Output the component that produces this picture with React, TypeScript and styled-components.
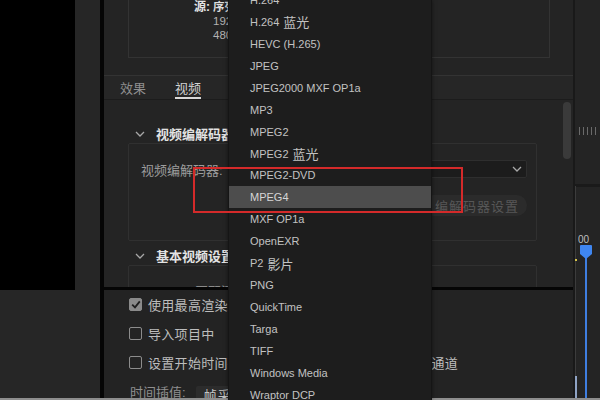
import React from "react";
import styled, { createGlobalStyle } from "styled-components";

const Global = createGlobalStyle`
  html, body { margin: 0; padding: 0; background: #252525; }
  body { font-family: "Liberation Sans", "Noto Sans CJK SC", sans-serif; }
  * { box-sizing: border-box; }
`;

const Root = styled.div`
  position: relative;
  width: 600px;
  height: 400px;
  overflow: hidden;
  background: #252525;
  display: flex;
  flex-direction: column;
  font-family: "Liberation Sans", "Noto Sans CJK SC", sans-serif;
`;

const Workspace = styled.div`
  display: flex;
  height: 398px;
`;

const BottomStrip = styled.div`
  height: 2px;
  background: #8e8e8e;
`;

const LeftPane = styled.div`
  width: 100px;
  display: flex;
  flex-direction: column;
  background: #262626;
`;

const Preview = styled.div`
  width: 75px;
  height: 290px;
  background: #000;
`;

const VDivider = styled.div`
  width: 4px;
  background: #050505;
`;

const ExportPanel = styled.div`
  width: 469px;
  display: flex;
  flex-direction: column;
  background: #242424;
`;

const Summary = styled.div`
  height: 76px;
  padding-left: 24px;
`;

const SummaryBox = styled.div`
  width: 422px;
  height: 58px;
  border-left: 1px solid #333;
  border-right: 1px solid #333;
  border-bottom: 1px solid #333;
  display: grid;
  grid-template-columns: 81px auto;
  grid-auto-rows: 14px;
  column-gap: 3px;
  align-content: start;
  padding-top: 0;
`;

const SumLabel = styled.div`
  text-align: right;
  font-size: 12px;
  line-height: 14px;
  font-weight: bold;
  color: #e4e4e4;
`;

const SumValue = styled.div<{ $bold?: boolean }>`
  font-size: 11.5px;
  line-height: 14px;
  color: ${(p) => (p.$bold ? "#dcdcdc" : "#b2b2b2")};
  font-weight: ${(p) => (p.$bold ? "bold" : "normal")};
  white-space: nowrap;
`;

const TabBar = styled.div`
  height: 25px;
  border-top: 1px solid #333;
  border-bottom: 1px solid #1c1c1c;
  display: flex;
  align-items: stretch;
  gap: 29px;
  padding-left: 16px;
  background: #262626;
`;

const Tab = styled.div<{ $active?: boolean }>`
  font-size: 13px;
  color: ${(p) => (p.$active ? "#d2d2d2" : "#8e8e8e")};
  display: flex;
  align-items: center;
  padding-top: 1px;
  border-bottom: 2px solid ${(p) => (p.$active ? "#d8d8d8" : "transparent")};
`;

const SettingsArea = styled.div`
  height: 188px;
  display: flex;
  overflow: hidden;
`;

const SettingsContent = styled.div`
  flex: 1;
  display: flex;
  flex-direction: column;
  padding-top: 24px;
`;

const ScrollTrack = styled.div`
  width: 10px;
  padding-top: 2px;
`;

const ScrollThumb = styled.div`
  width: 8px;
  height: 57px;
  border-radius: 4px;
  background: #3a3a3a;
`;

const SectionHeader = styled.div<{ $gap?: number }>`
  height: 20px;
  display: flex;
  align-items: center;
  gap: 11px;
  padding-left: 31px;
  margin-top: ${(p) => p.$gap ?? 0}px;
  font-size: 13px;
  font-weight: bold;
  color: #e2e2e2;
`;

const SectionBox = styled.div<{ $h: number }>`
  margin-left: 24px;
  width: 409px;
  height: ${(p) => p.$h}px;
  flex-shrink: 0;
  border: 1px solid #303030;
  border-radius: 2px;
  display: flex;
  flex-direction: column;
  padding: 16px 9px 0 12px;
`;

const FieldRow = styled.div`
  display: flex;
  align-items: center;
  height: 18px;
  gap: 6px;
`;

const FieldLabel = styled.span`
  font-size: 13px;
  color: #9d9d9d;
  white-space: nowrap;
`;

const SelectField = styled.div`
  flex: 1;
  height: 18px;
  background: #1c1c1c;
  border: 1px solid #2e2e2e;
  border-radius: 2px;
  display: flex;
  align-items: center;
  justify-content: flex-end;
  padding-right: 4px;
`;

const ButtonRow = styled.div`
  display: flex;
  justify-content: flex-end;
  margin-top: 17px;
`;

const PillButton = styled.div`
  width: 104px;
  height: 21px;
  border-radius: 11px;
  background: #2b2b2b;
  font-size: 13px;
  color: #575757;
  display: flex;
  align-items: center;
  justify-content: flex-end;
  padding-right: 8px;
  letter-spacing: 1px;
`;

const FaintText = styled.div`
  font-size: 13px;
  color: #8a8a8a;
  padding-left: 54px;
  margin-top: -1px;
`;

const HBar = styled.div`
  height: 3px;
  background: #050505;
`;

const Options = styled.div`
  flex: 1;
  display: grid;
  grid-template-columns: 201px auto;
  grid-auto-rows: 14px;
  row-gap: 15px;
  padding: 7px 0 0 25px;
  background: #232323;
`;

const CheckRow = styled.div`
  display: flex;
  align-items: center;
  gap: 6px;
  font-size: 13px;
  color: #bdbdbd;
  white-space: nowrap;
  letter-spacing: 0.3px;
`;

const Box = styled.div<{ $checked?: boolean }>`
  width: 13px;
  height: 13px;
  border-radius: 2px;
  border: 1.5px solid ${(p) => (p.$checked ? "#8a8a8a" : "#8c8c8c")};
  background: ${(p) => (p.$checked ? "#8a8a8a" : "transparent")};
  display: flex;
  align-items: center;
  justify-content: center;
  flex-shrink: 0;
`;

const InterpRow = styled.div`
  grid-column: 1 / span 2;
  display: flex;
  align-items: center;
  gap: 10px;
  padding-left: 1px;
  font-size: 13px;
  color: #8f8f8f;
`;

const SmallSelect = styled.div`
  height: 17px;
  margin-top: 6px;
  padding: 0 8px;
  background: #2c2c2c;
  border-radius: 2px;
  color: #c4c4c4;
  display: flex;
  align-items: center;
  letter-spacing: 1px;
`;

const Timeline = styled.div`
  position: relative;
  flex: 1;
  background: #242424;
  border-left: 2px solid #191919;
  display: flex;
  flex-direction: column;
`;

const TimelineTicks = styled.div`
  margin-top: 127px;
  height: 8px;
  display: flex;
  gap: 3px;
  padding-left: 4px;
`;

const Tick = styled.div`
  width: 1px;
  background: #6a6a6a;
`;

const TimelineBand = styled.div`
  margin-top: 49px;
  height: 3px;
  background: #1a1a1a;
`;

const TrackLine = styled.div`
  position: absolute;
  left: 0;
  top: 186px;
  bottom: 0;
  width: 1px;
  background: #3c3c3c;
`;

const PlayheadTime = styled.div`
  position: absolute;
  left: 3px;
  top: 234px;
  font-size: 10px;
  color: #bfbfbf;
`;

const PlayheadLine = styled.div`
  position: absolute;
  left: 10px;
  top: 250px;
  bottom: 0;
  width: 2px;
  background: #3f7ee0;
`;

const PlayheadHandle = styled.svg`
  position: absolute;
  left: 5px;
  top: 245px;
`;

const YellowDot = styled.div`
  position: absolute;
  left: 0;
  top: 259px;
  width: 2px;
  height: 2px;
  background: #d8c54a;
`;

const OutMarker = styled.div`
  position: absolute;
  left: 0;
  top: 376px;
  bottom: 0;
  width: 2px;
  background: #8fa3c4;
`;

const Menu = styled.div`
  position: absolute;
  left: 228px;
  top: 0;
  width: 204px;
  height: 400px;
  background: #1d1d1d;
  border-left: 1px solid #151515;
  border-right: 1px solid #151515;
  box-shadow: 0 0 4px rgba(0, 0, 0, 0.5);
  overflow: hidden;
`;

const MenuList = styled.div`
  margin-top: -11px;
  display: flex;
  flex-direction: column;
`;

const MenuItem = styled.div<{ $active?: boolean }>`
  height: 21.95px;
  display: flex;
  align-items: center;
  padding-left: 21px;
  font-size: 11px;
  color: ${(p) => (p.$active ? "#d6d6d6" : "#c2c2c2")};
  background: ${(p) => (p.$active ? "#4d4d4d" : "transparent")};
  white-space: nowrap;
`;

const Cjk = styled.span`
  font-size: 13px;
  margin-left: 4px;
`;

const RedFrame = styled.div`
  position: absolute;
  left: 193px;
  top: 167px;
  width: 270px;
  height: 46px;
  border: 2px solid #d42a2a;
  pointer-events: none;
`;

const Chevron = () => (
  <svg width="10" height="6" viewBox="0 0 10 6">
    <path d="M1 1 L5 5 L9 1" fill="none" stroke="#a8a8a8" strokeWidth="1.3" />
  </svg>
);

const Check = () => (
  <svg width="10" height="9" viewBox="0 0 10 9">
    <path d="M1.2 4.6 L4 7.4 L8.8 1.4" fill="none" stroke="#1e1e1e" strokeWidth="1.8" />
  </svg>
);

const formats: { name: string; cjk?: string }[] = [
  { name: "H.264" },
  { name: "H.264", cjk: "蓝光" },
  { name: "HEVC (H.265)" },
  { name: "JPEG" },
  { name: "JPEG2000 MXF OP1a" },
  { name: "MP3" },
  { name: "MPEG2" },
  { name: "MPEG2", cjk: "蓝光" },
  { name: "MPEG2-DVD" },
  { name: "MPEG4" },
  { name: "MXF OP1a" },
  { name: "OpenEXR" },
  { name: "P2", cjk: "影片" },
  { name: "PNG" },
  { name: "QuickTime" },
  { name: "Targa" },
  { name: "TIFF" },
  { name: "Windows Media" },
  { name: "Wraptor DCP" },
];

export default function App() {
  return (
    <Root>
      <Global />
      <Workspace>
        <LeftPane>
          <Preview />
        </LeftPane>
        <VDivider />
        <ExportPanel>
          <Summary>
            <SummaryBox>
              <SumLabel>源:</SumLabel>
              <SumValue $bold>序列, 序列 01</SumValue>
              <SumLabel />
              <SumValue>1920x1080 (1.0), 25 fps, 逐行, 00:00:10:21</SumValue>
              <SumLabel />
              <SumValue>48000 Hz, 立体声</SumValue>
            </SummaryBox>
          </Summary>
          <TabBar>
            <Tab>效果</Tab>
            <Tab $active>视频</Tab>
          </TabBar>
          <SettingsArea>
            <SettingsContent>
              <SectionHeader>
                <Chevron />
                视频编解码器
              </SectionHeader>
              <SectionBox $h={98}>
                <FieldRow>
                  <FieldLabel>视频编解码器:</FieldLabel>
                  <SelectField>
                    <Chevron />
                  </SelectField>
                </FieldRow>
                <ButtonRow>
                  <PillButton>编解码器设置</PillButton>
                </ButtonRow>
              </SectionBox>
              <SectionHeader $gap={5}>
                <Chevron />
                基本视频设置
              </SectionHeader>
              <SectionBox $h={60}>
                <FaintText>匹配源</FaintText>
              </SectionBox>
            </SettingsContent>
            <ScrollTrack>
              <ScrollThumb />
            </ScrollTrack>
          </SettingsArea>
          <HBar />
          <Options>
            <CheckRow>
              <Box $checked>
                <Check />
              </Box>
              使用最高渲染质量
            </CheckRow>
            <div />
            <CheckRow>
              <Box />
              导入项目中
            </CheckRow>
            <div />
            <CheckRow>
              <Box />
              设置开始时间码
            </CheckRow>
            <CheckRow>
              <Box />
              仅渲染 Alpha 通道
            </CheckRow>
            <InterpRow>
              时间插值:
              <SmallSelect>帧采样</SmallSelect>
            </InterpRow>
          </Options>
        </ExportPanel>
        <Timeline>
          <TimelineTicks>
            <Tick />
            <Tick />
            <Tick />
            <Tick />
            <Tick />
          </TimelineTicks>
          <TimelineBand />
          <TrackLine />
          <PlayheadTime>00</PlayheadTime>
          <PlayheadLine />
          <PlayheadHandle width="12" height="14" viewBox="0 0 12 14">
            <path d="M0 1 Q0 0 1 0 L11 0 Q12 0 12 1 L12 9 L6 14 L0 9 Z" fill="#3f86f0" />
          </PlayheadHandle>
          <YellowDot />
          <OutMarker />
        </Timeline>
      </Workspace>
      <BottomStrip />
      <Menu>
        <MenuList>
          {formats.map((f, i) => (
            <MenuItem key={i} $active={f.name === "MPEG4"}>
              {f.name}
              {f.cjk && <Cjk>{f.cjk}</Cjk>}
            </MenuItem>
          ))}
        </MenuList>
      </Menu>
      <RedFrame />
    </Root>
  );
}
